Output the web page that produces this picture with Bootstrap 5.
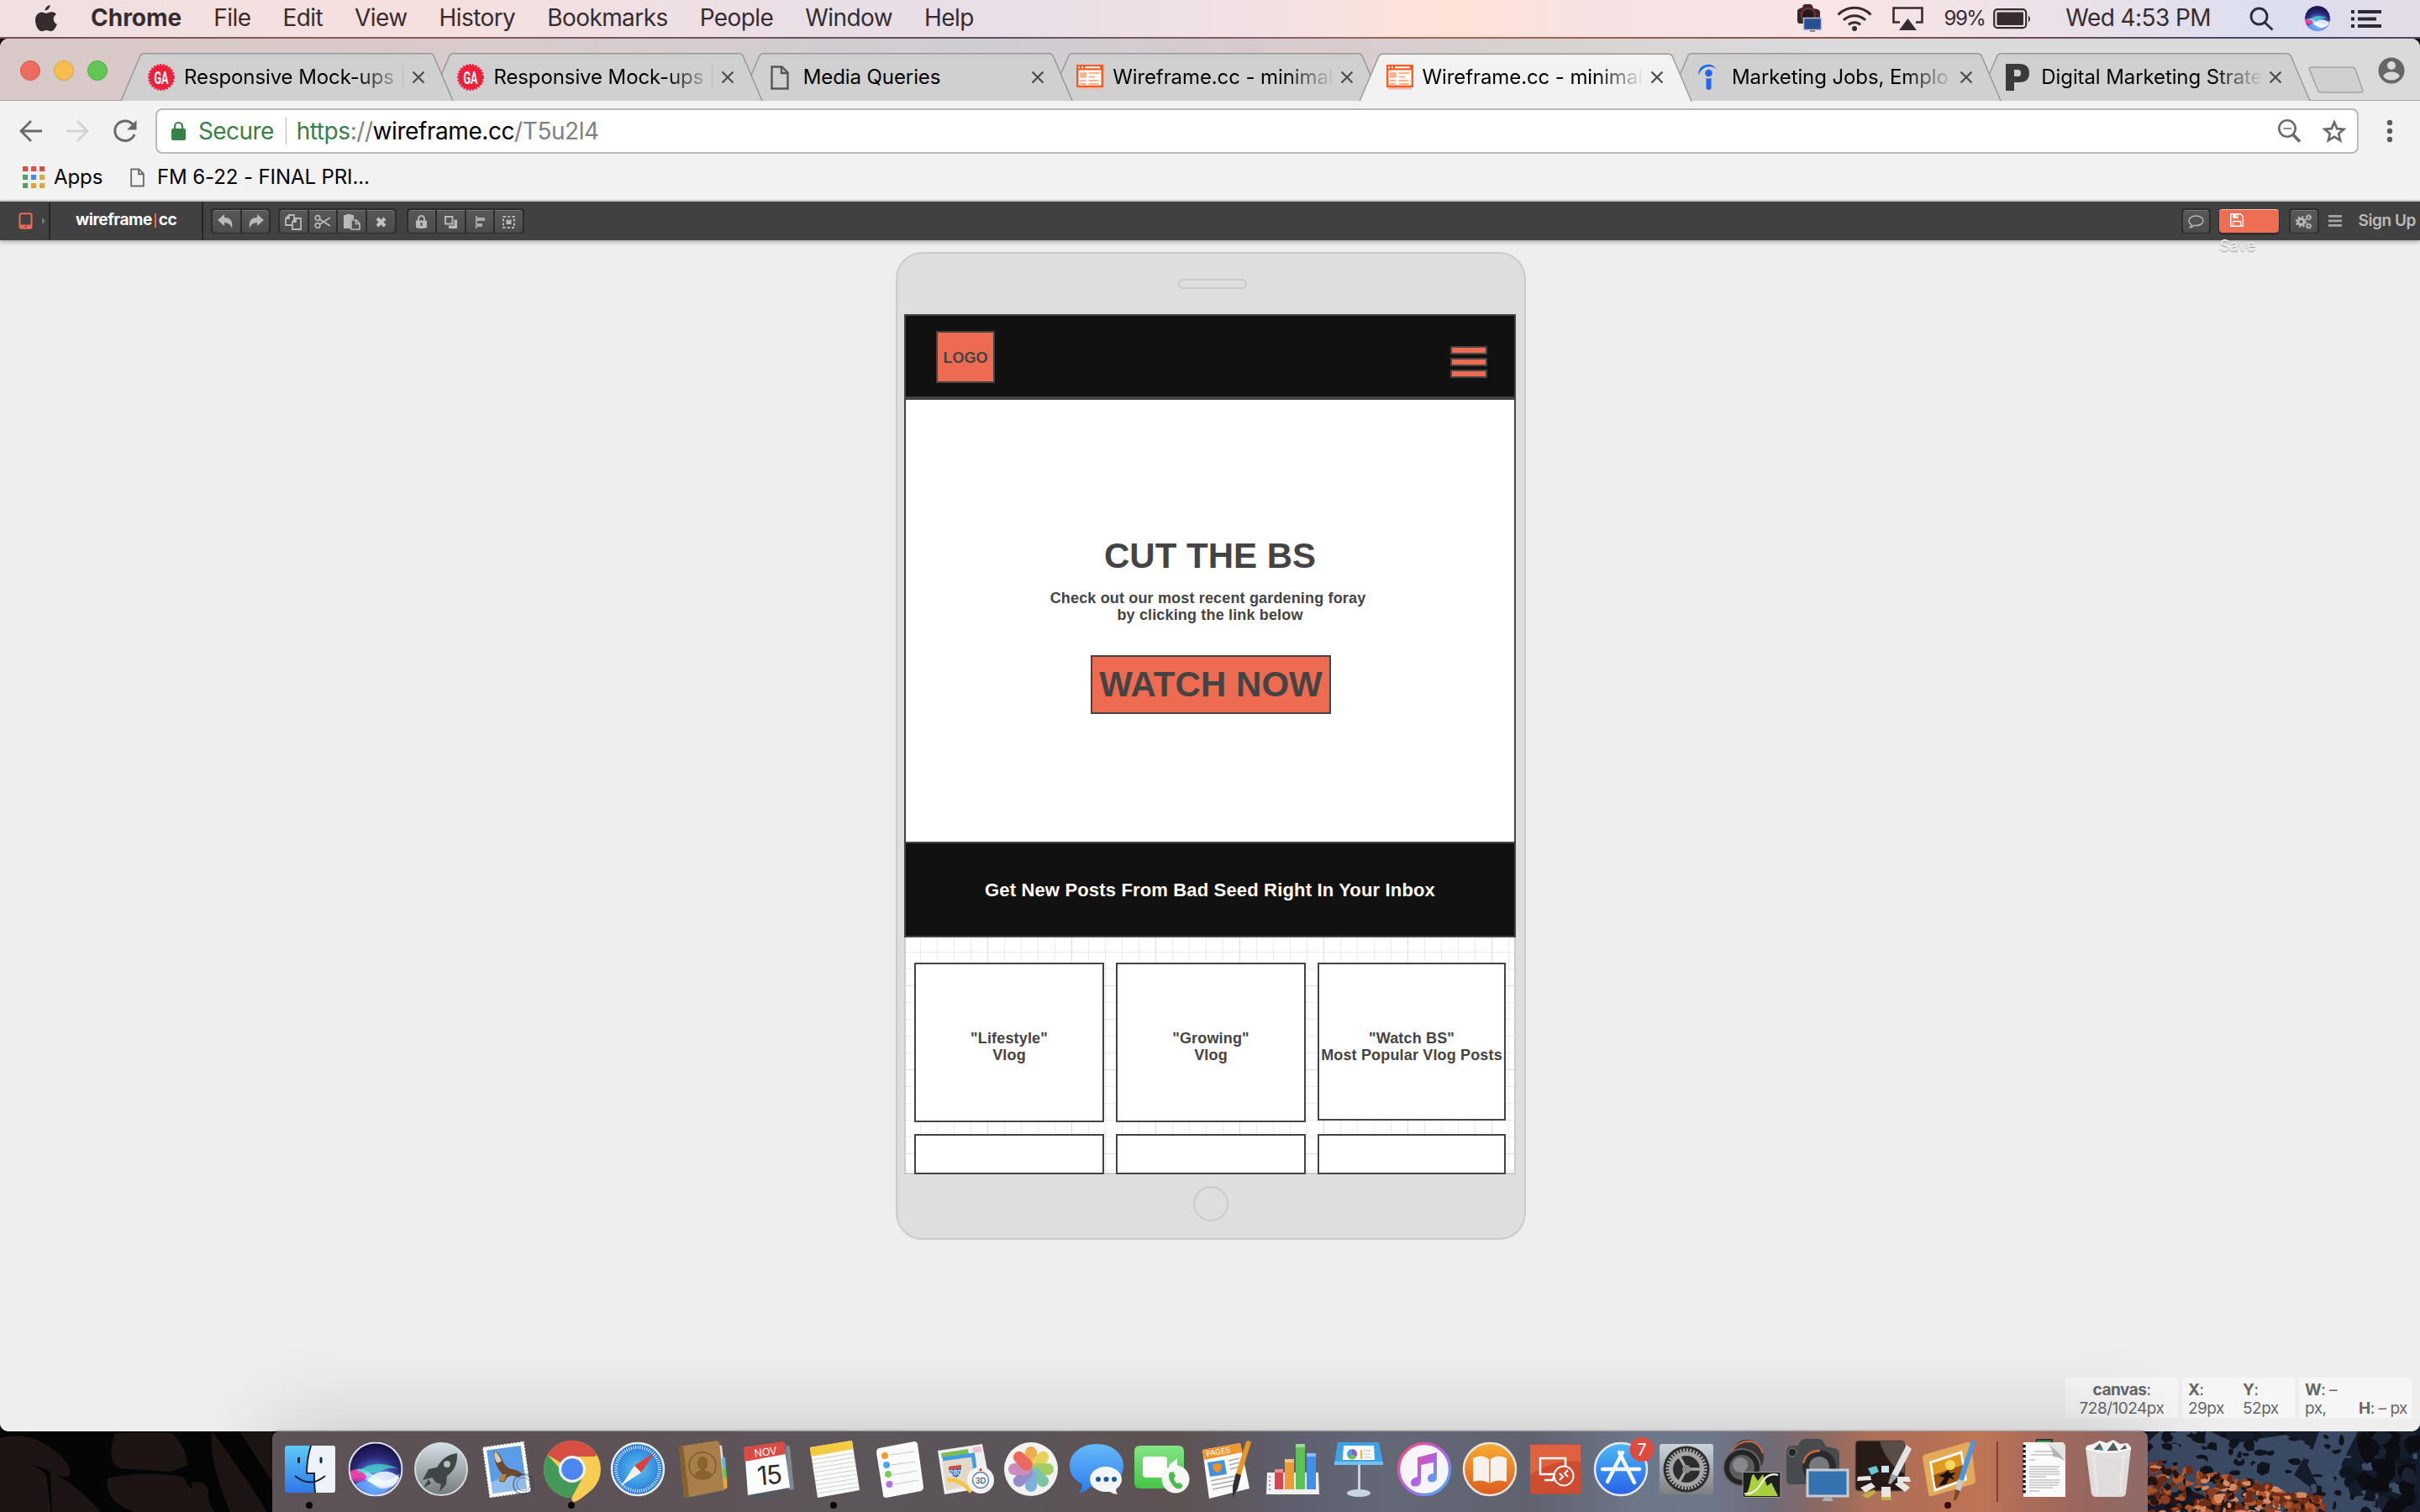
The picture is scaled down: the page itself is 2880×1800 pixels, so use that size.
<!DOCTYPE html>
<html lang="en">
<head>
<meta charset="utf-8">
<title>Wireframe.cc - minimal wireframing tool</title>
<link href="https://cdn.jsdelivr.net/npm/bootstrap@5.3.0/dist/css/bootstrap.min.css" rel="stylesheet">
<script src="https://cdn.jsdelivr.net/npm/bootstrap@5.3.0/dist/js/bootstrap.bundle.min.js"></script>
<style>
  html, body { width: 2880px; height: 1800px; overflow: hidden; }
  body { font-family: Inter, "Noto Sans", sans-serif; color: #000; background: #0d0b0b; line-height: 1.2; }
  svg { display: block; flex: none; overflow: visible; }

  /* macOS menu bar */
  .menubar { height: 46px; font-size: 28px; color: #362c2f; white-space: nowrap; letter-spacing: -.58px;
    background: linear-gradient(90deg,#f0e0e1 0,#f6e0df 520px,#e8dfe6 1000px,#e9dfe6 1250px,#f2e1e3 1500px,#ffe2d8 1730px,#f6e2e2 1900px,#f9e5e5 2180px,#e9e0e9 2480px,#dcdff0 2700px,#e3dbe6 2880px); }
  .menubar-rule { height: 2px; background: linear-gradient(90deg,#7c5052 0,#875c5c 500px,#5b4d60 1150px,#85616a 1500px,#a2674f 1750px,#8a5050 2200px,#474766 2700px,#4f4466 2880px); }
  .menu-left { padding-left: 41px; gap: 38px; height: 44px; }
  .menu-app { margin-left: 2px; letter-spacing: 0; }
  .menu-right { padding-right: 46px; }
  .batt-text { font-size: 24px; letter-spacing: -1.5px; margin-left: 25px; }

  /* browser frame */
  .browser { height: 1658px; background: #f2f2f2; border-radius: 10px; overflow: hidden; z-index: 1; }
  .tabstrip { height: 73px; background: linear-gradient(90deg,#d9c8c8 0,#d8cbcb 600px,#cfcdd3 1200px,#d8cacd 1520px,#d8d4d2 1900px,#dadada 2150px,#dadada 2880px); }
  .lights { width: 144px; padding: 26px 0 0 23.5px; gap: 16px; }
  .lights i { width: 24px; height: 24px; border-radius: 50%; border: 1px solid; }
  .l-red { background: #ed6b60; border-color: #d6574c !important; }
  .l-yel { background: #f5be4f; border-color: #d9a33c !important; }
  .l-grn { background: #62c655; border-color: #4faa42 !important; }
  .tab-item { width: 368.4px; height: 56px; margin-top: 17px; padding: 2px 0 0 32px; }
  .tab-shape { position: absolute; left: 0; top: 0; z-index: -1; }
  .tab-ico { width: 43px; }
  .tab-text { width: 271px; height: 32px; font-size: 24px; line-height: 32px; overflow: hidden; white-space: nowrap; letter-spacing: -.1px; }
  .tab-fade { -webkit-mask-image: linear-gradient(90deg,#000 205px,transparent 264px); mask-image: linear-gradient(90deg,#000 205px,transparent 264px); }
  .strip-rule { height: 1px; background: #a2a0a2; }
  .navrow { height: 72px; padding-left: 23px; }
  .omnibox { width: 2622px; height: 54px; margin-left: 22px; background: #fff; border: 2px solid #b8b8b8; border-radius: 8px; font-size: 28px; padding: 0 12px 0 17px; letter-spacing: -.43px; }
  .omnibox span { padding-top: 1px; }
  .vr-line { width: 1px; height: 32px; background: #b5b5b5; margin: 0 12px 0 14px; }
  .c-green { color: #378047; } .c-gray { color: #808080; }
  .bookrow { height: 48px; font-size: 24px; padding: 0 0 7px 27px; border-bottom: 2px solid #d0d0d0; letter-spacing: -.1px; }

  /* wireframe.cc toolbar */
  .wfbar { height: 46px; background: #414141; box-shadow: 0 2px 5px rgba(0,0,0,.3); z-index: 3; font-size: 19px; font-weight: 600; color: #bbb; white-space: nowrap; letter-spacing: -.42px; }
  .wf-dev { width: 60px; height: 44px; border-right: 2px solid #262626; padding-left: 22px; gap: 11px; }
  .wf-brand { width: 182px; height: 46px; border-right: 2px solid #262626; color: #fff; padding: 0 0 1px 30px; font-weight: 700; }
  .wf-brand em { width: 2px; height: 17px; background: #ee6a50; margin: 0 3px; }
  .tool-group { height: 30px; border-radius: 4px; background: #2d2d2d; padding: 2px; gap: 2px; }
  .tool-group b { height: 27px; width: 32.6px; background: linear-gradient(#575757,#4c4c4c); border-top: 1px solid #777; display: flex; align-items: center; justify-content: center; }
  .tool-group b:first-child { border-radius: 4px 0 0 4px; } .tool-group b:last-child { border-radius: 0 4px 4px 0; }
  .tool-group b:only-child { border-radius: 4px; }
  .save-btn { width: 71px; height: 28px; border-radius: 4px; background: #ee6e53; border-top: 1px solid #ffb9a6; box-shadow: 0 2px 0 1px #303030; padding: 4px 0 0 13px; }
  .save-word { position: absolute; left: 0; top: 32px; color: #ececec; font-weight: 500; text-shadow: 0 1px 1px #999; }

  /* canvas */
  .stage { height: 1418px; background: #eee; }
  .phone { width: 750px; height: 1176px; margin: 14px 0 0 1066px; background: #dedede; border: 2px solid #cbcbcb; border-radius: 32px; }
  .speaker { width: 82px; height: 12px; border: 2px solid #cbcbcb; border-radius: 6px; margin: 30px 0 30px 334px; }
  .home-btn { width: 42px; height: 42px; border: 2px solid #cbcbcb; border-radius: 50%; margin: 14px auto 0 352px; }
  .screen { width: 728px; height: 1024px; margin-left: 8px; overflow: hidden; font-family: "Liberation Sans", Arial, sans-serif; font-weight: 700; font-size: 18px; line-height: 20px; color: #444; letter-spacing: .16px; text-align: center;
    background:
      linear-gradient(90deg,#ddd 1px,transparent 1px) -1px -1px/100px 100px,
      linear-gradient(#ddd 1px,transparent 1px) -1px -1px/100px 100px,
      linear-gradient(90deg,#ececec 1px,transparent 1px) -1px -1px/20px 20px,
      linear-gradient(#ececec 1px,transparent 1px) -1px -1px/20px 20px, #fff;
    box-shadow: inset 0 0 0 2px #ccc; }
  .box { border: 2px solid #444; }
  .m-head { height: 100px; background: #111; padding: 18px 32px 0 36px; }
  .m-logo { width: 70px; height: 62px; background: #ee6b51; padding-top: 2px; letter-spacing: 0; }
  .m-burger { gap: 4px; margin-top: 18px; }
  .m-burger i { width: 44px; height: 10px; background: #ee6b51; }
  .m-hero { height: 530px; background: #fff; padding-top: 162px; }
  .m-title { font-size: 42px; line-height: 48px; letter-spacing: 0; }
  .m-note { margin-top: 16px; }
  .m-lead { display: inline-block; margin-right: 5px; }
  .m-cta { width: 286px; height: 70px; background: #ee6b51; font-size: 42px; margin: 38px 0 0 2px; letter-spacing: .05px; }
  .m-band { height: 114px; margin-top: -2px; background: #111; color: #fff; font-size: 22px; padding-top: 1px; }
  .m-cards { padding: 30px 12px 0; gap: 14px; align-items: flex-start; }
  .m-card { width: 226px; height: 190px; background: #fff; white-space: nowrap; padding-top: 10px; }
  .m-card.slim { width: 224px; height: 188px; padding-top: 12px; }
  .m-cards.second { padding-top: 14px; }
  .second .m-card { height: 48px; padding: 0; }

  .readout { position: absolute; right: 10px; bottom: 16px; gap: 5px; font-size: 19px; line-height: 22px; color: #666; z-index: 2; letter-spacing: -.5px; }
  .readout > div { width: 134px; height: 48px; background: #f6f6f6; padding-top: 4px; white-space: nowrap; }
  .ro-xy { padding-left: 7px; } .ro-xy > :first-child { width: 65px; }
  .ro-wh { padding-left: 7px; padding-right: 5px; }

  /* dock and desktop */
  .wallpaper { position: absolute; left: 0; bottom: 0; }
  .dock { width: 2232px; height: 96px; margin-left: 324px; padding-left: 5px; border-radius: 8px 8px 0 0; box-shadow: 0 0 110px rgba(0,0,0,.2), 0 -1px 2px rgba(0,0,0,.35); z-index: 4;
    background: linear-gradient(90deg,#5d5357 0,#5c5154 250px,#5d5559 600px,#5b5458 900px,#5e5353 1080px,#5f6070 1230px,#636877 1330px,#61626e 1500px,#6e7689 1620px,#6f778b 1710px,#6f6b78 1780px,#8e6a62 1850px,#ad7059 1900px,#b46f55 1970px,#c07455 2030px,#ab6c5a 2090px,#97675f 2160px,#8f6a68 2232px); }
  .dock text { font-family: Inter, sans-serif; }
  .dock-sep { width: 2px; height: 72px; margin: 12px 15px 0 19px; background: #80402f; }
</style>
</head>
<body class="d-flex flex-column position-relative">

<header class="menubar d-flex flex-column flex-shrink-0">
  <div class="d-flex align-items-center position-relative menu-left">
    <svg width="27" height="32" viewBox="0 0 27 32" fill="#362c2f"><path d="M18.6 0c.2 3-2.700 6.600-6 6.400C12.300 3.500 15.500.3 18.600 0zM26 11c-5 3-4 10 .9 11.800C25.500 27 22.500 31.300 19.800 31.300c-2 0-2.900-1.300-5.500-1.300-2.700 0-3.600 1.300-5.500 1.300C5 31.300 1 24.500 1 17.900 1 12 4.800 8.400 8.700 8.400c2.300 0 4.100 1.400 5.600 1.400 1.400 0 3.400-1.500 6.100-1.500 1.500 0 4 .5 5.600 2.700z"/></svg>
    <span class="menu-app fw-bold">Chrome</span>
    <span>File</span><span>Edit</span><span>View</span><span>History</span>
    <span>Bookmarks</span><span>People</span><span>Window</span><span>Help</span>
    <div class="d-flex align-items-center ms-auto menu-right">
      <svg width="34" height="34" viewBox="0 0 34 34"><path d="M3 8q0-2 3-3l3-1 1-3q1-1 3-1h5q2 0 3 2l1 3 5 1q3 1 3 4v13H6q-3 0-3-3z" fill="#3c2527"/><circle cx="16" cy="13" r="8" fill="#241a1e" stroke="#7c3438" stroke-width="2"/><rect x="10.500" y="16.500" width="21" height="14" fill="#2b4f92" stroke="#b9c4d6" stroke-width="1.500"/><path d="M18 31h6v2h-6z" fill="#888"/></svg>
      <svg class="ms-3" width="42" height="30" viewBox="0 0 42 30" fill="none" stroke="#362c2f" stroke-width="3"><path d="M1.500 10.500a27 27 0 0 1 39 0M8 17a18.500 18.500 0 0 1 26 0M14 22.500a10 10 0 0 1 14 0"/><circle cx="21" cy="27" r="3" fill="#362c2f" stroke="none"/></svg>
      <svg style="margin-left:24px" width="37" height="28" viewBox="0 0 37 28"><path d="M9 18.500H1.500V1.500h34v17H28" fill="none" stroke="#362c2f" stroke-width="2.600"/><path d="M18.500 14l10.500 14H8z" fill="#362c2f"/></svg>
      <span class="batt-text">99%</span>
      <svg style="margin-left:10px" width="46" height="25" viewBox="0 0 46 25"><rect x="1.200" y="1.200" width="38" height="22" rx="4" fill="none" stroke="#362c2f" stroke-width="2.200"/><rect x="4.500" y="4.500" width="31.500" height="15.500" rx="1" fill="#362c2f"/><path d="M42 8.500q4 4 0 8z" fill="#362c2f"/></svg>
      <span style="margin-left:40px">Wed 4:53 PM</span>
      <svg style="margin-left:46px" width="29" height="29" viewBox="0 0 29 29" fill="none" stroke="#2f2a33" stroke-width="2.800"><circle cx="11.500" cy="11.500" r="9.500"/><path d="M18 18.500l9.500 9"/></svg>
      <svg style="margin-left:36px" width="32" height="32" viewBox="0 0 64 64"><use href="#siri"/></svg>
      <svg style="margin-left:24px" width="36" height="21" viewBox="0 0 36 21" fill="#2d2a33"><path d="M0 0h4v4H0zM8 0h28v4H8zM0 8.500h4v4H0zM8 8.500h22v4H8zM0 17h4v4H0zM8 17h28v4H8z"/></svg>
    </div>
  </div>
  <div class="menubar-rule"></div>
</header>

<svg width="0" height="0" class="position-absolute">
  <defs>
    <radialGradient id="sg" cx=".5" cy=".75" r=".8"><stop offset="0" stop-color="#6fd4ff"/><stop offset=".3" stop-color="#5877e8"/><stop offset=".6" stop-color="#2c2a78"/><stop offset="1" stop-color="#0c0633"/></radialGradient>
    <symbol id="siri" viewBox="0 0 64 64"><circle cx="32" cy="32" r="31" fill="url(#sg)" stroke="#dfe3f2" stroke-width="2"/><path d="M2 36q14-10 28 4 14 12 30-3-2 8-8 14-20 4-30-6-8-6-20 0z" fill="#b8f2ff" opacity=".75"/><path d="M2 34c8-4 15 0 20 8-6 4-12 6-18 2z" fill="#ef2f9c" opacity=".85"/><path d="M22 46c8-12 26-16 38-4-4 12-18 16-26 12z" fill="#fff" opacity=".8"/><path d="M10 36q20-18 50-4-14-4-24 4z" fill="#42e0c0" opacity=".7"/><path d="M8 50q12-8 22 0t20 2q-8 10-18 10T8 50z" fill="#6aa9ff" opacity=".7"/></symbol>
    <symbol id="ga" viewBox="0 0 32 32"><circle cx="16" cy="16" r="14.500" fill="#ee1f3b"/><circle cx="16" cy="16" r="15" fill="none" stroke="#ee1f3b" stroke-width="2" stroke-dasharray="2.200 1.600"/><text x="16" y="23.500" text-anchor="middle" font-family="Roboto, sans-serif" font-weight="700" font-size="21" textLength="17" lengthAdjust="spacingAndGlyphs" fill="#fff">GA</text></symbol>
    <symbol id="wf" viewBox="0 0 32 30"><rect x="2" y="26" width="28" height="3.500" fill="#e9b9ab"/><rect x="1.200" y="1.200" width="29.600" height="24.600" fill="#fff" stroke="#ff5a1e" stroke-width="2.400"/><path d="M0 0h32v6.500H0z" fill="#ff5a1e"/><path d="M2 2.200h2v2H2zM6 2.200h2v2H6zM10 2.200h18v2H10z" fill="#fff"/><path d="M4 9h8v6.500H4zM14.500 9h13v2h-13zM14.500 13.500h7.500v2h-7.500zM4 18h7.500v2H4zM14.500 18h12v2h-12zM4 22h7.500v2H4zM14.500 22h12v2h-12z" fill="#ffb28c"/></symbol>
    <symbol id="page" viewBox="0 0 22 29"><path d="M1.500 1.500h12l7 7v19h-19z M13 1.500v7.500h7.500" fill="none" stroke="currentColor" stroke-width="2.400"/></symbol>
    <symbol id="x" viewBox="0 0 16 16"><path d="M1.500 1.500l13 13M14.500 1.500l-13 13" stroke="#4c4c4c" stroke-width="2.200" fill="none"/></symbol>
    <symbol id="tabbg" viewBox="0 0 396 57"><path d="M0 57L23 3Q24.500.7 27 .7H368Q370.500.7 372 3L395 57" stroke="#979597" stroke-width="1.400"/></symbol>
  </defs>
</svg>

<div class="browser d-flex flex-column flex-shrink-0 position-relative">
  <div class="tabstrip d-flex">
    <div class="lights d-flex"><i class="l-red"></i><i class="l-yel"></i><i class="l-grn"></i></div>
    <div class="tab-item d-flex align-items-center position-relative" style="z-index:7"><svg class="tab-shape" width="396" height="57" fill="#d0d0d0"><use href="#tabbg"/></svg><div class="tab-ico"><svg width="32" height="32"><use href="#ga"/></svg></div><div class="tab-text tab-fade">Responsive Mock-ups |</div><svg width="16" height="16"><use href="#x"/></svg></div>
    <div class="tab-item d-flex align-items-center position-relative" style="z-index:6"><svg class="tab-shape" width="396" height="57" fill="#d0d0d0"><use href="#tabbg"/></svg><div class="tab-ico"><svg width="32" height="32"><use href="#ga"/></svg></div><div class="tab-text tab-fade">Responsive Mock-ups |</div><svg width="16" height="16"><use href="#x"/></svg></div>
    <div class="tab-item d-flex align-items-center position-relative" style="z-index:5"><svg class="tab-shape" width="396" height="57" fill="#d0d0d0"><use href="#tabbg"/></svg><div class="tab-ico" style="color:#555;padding-left:4px"><svg width="22" height="29"><use href="#page"/></svg></div><div class="tab-text">Media Queries</div><svg width="16" height="16"><use href="#x"/></svg></div>
    <div class="tab-item d-flex align-items-center position-relative" style="z-index:4"><svg class="tab-shape" width="396" height="57" fill="#d0d0d0"><use href="#tabbg"/></svg><div class="tab-ico"><svg width="32" height="30"><use href="#wf"/></svg></div><div class="tab-text tab-fade">Wireframe.cc - minimal</div><svg width="16" height="16"><use href="#x"/></svg></div>
    <div class="tab-item d-flex align-items-center position-relative" style="z-index:8"><svg class="tab-shape" width="396" height="58" fill="#f2f2f2"><use href="#tabbg"/></svg><div class="tab-ico"><svg width="32" height="30"><use href="#wf"/></svg></div><div class="tab-text tab-fade">Wireframe.cc - minimal</div><svg width="16" height="16"><use href="#x"/></svg></div>
    <div class="tab-item d-flex align-items-center position-relative" style="z-index:3"><svg class="tab-shape" width="396" height="57" fill="#d0d0d0"><use href="#tabbg"/></svg><div class="tab-ico" style="padding-left:3px"><svg width="22" height="32" viewBox="0 0 22 32" fill="#2164f4"><circle cx="12.500" cy="11" r="4.300"/><path d="M9.500 17q3 1.500 6-.5v12.500q-.5 2-3 2t-3-2zM.3 14Q-.5 4 8 1.500T21 5.500Q14 1.500 8 4.500T.3 14z"/></svg></div><div class="tab-text tab-fade">Marketing Jobs, Emplo</div><svg width="16" height="16"><use href="#x"/></svg></div>
    <div class="tab-item d-flex align-items-center position-relative" style="z-index:2"><svg class="tab-shape" width="396" height="57" fill="#d0d0d0"><use href="#tabbg"/></svg><div class="tab-ico"><svg width="30" height="32" viewBox="0 0 30 32"><path d="M1 0h16q12 0 12 11T17 22h-6v10H1zM11 7v8h5q3 0 3-4t-3-4z" fill="#3a3a3a" fill-rule="evenodd"/></svg></div><div class="tab-text tab-fade">Digital Marketing Strate</div><svg width="16" height="16"><use href="#x"/></svg></div>
    <svg style="margin:33px 0 0 24px" width="66" height="32" viewBox="0 0 66 32"><path d="M4 1h48q3 0 4 2.500l8.500 24q1 3.500-2 3.500h-47q-3 0-4-2.500L1.500 4Q.8 1 4 1z" fill="#d0d0d0" stroke="#a3a3a3" stroke-width="1.500"/></svg>
    <svg style="margin:22px 0 0 17px" width="32" height="32" viewBox="0 0 32 32"><circle cx="16" cy="16" r="15.500" fill="#666"/><circle cx="16" cy="10" r="5" fill="#dadada"/><path d="M6 22.500q3-5 10-5t10 5q-3.500 5-10 5t-10-5z" fill="#dadada"/></svg>
  </div>
  <div class="strip-rule flex-shrink-0"></div>
  <div class="navrow d-flex align-items-center flex-shrink-0">
    <svg width="27" height="26" viewBox="0 0 27 26" fill="none" stroke="#696969" stroke-width="2.800"><path d="M27 13H2M14 1L2 13l12 12"/></svg>
    <svg style="margin-left:29px" width="27" height="26" viewBox="0 0 27 26" fill="none" stroke="#d3d3d3" stroke-width="2.800"><path d="M0 13h25M13 1l12 12-12 12"/></svg>
    <svg style="margin-left:29px" width="28" height="27" viewBox="0 0 28 27"><path d="M24 6.500A12 11.800 0 1 0 25 17" fill="none" stroke="#696969" stroke-width="3"/><path d="M27.500 0v11.500H16z" fill="#696969"/></svg>
    <div class="omnibox d-flex align-items-center">
      <svg width="17" height="22" viewBox="0 0 17 22"><rect y="8" width="17" height="14" rx="2" fill="#378047"/><path d="M4 9V5.500a4.500 4.500 0 0 1 9 0V9" fill="none" stroke="#378047" stroke-width="2.200"/></svg>
      <span class="c-green" style="margin-left:15px;letter-spacing:-.6px">Secure</span><span class="vr-line"></span>
      <span><span class="c-green">https</span><span class="c-gray">://</span>wireframe.cc<span class="c-gray">/T5u2l4</span></span>
      <svg class="ms-auto" width="27" height="28" viewBox="0 0 27 28" fill="none" stroke="#6a6a6a"><circle cx="11" cy="11" r="9.700" stroke-width="2.600"/><path d="M6.500 11h9.500" stroke-width="1.600"/><path d="M18 18.500l8 8" stroke-width="3.800"/></svg>
      <svg style="margin-left:25px" width="30" height="29" viewBox="0 0 30 29"><path d="M15 3.500l3.200 7.600 8.200.7-6.200 5.400 1.900 8L15 20.900l-7.100 4.300 1.900-8-6.200-5.400 8.200-.7z" fill="none" stroke="#6a6a6a" stroke-width="2.700"/></svg>
    </div>
    <svg style="margin-left:33px" width="8" height="28" viewBox="0 0 8 28" fill="#5c5c5c"><circle cx="4" cy="4" r="3.200"/><circle cx="4" cy="14" r="3.200"/><circle cx="4" cy="24" r="3.200"/></svg>
  </div>
  <div class="bookrow d-flex align-items-center flex-shrink-0">
    <svg width="27" height="27" viewBox="0 0 27 27"><path d="M0 0h6v6H0zM10 0h6v6h-6zM20 0h6v6h-6z" fill="#e04b3f"/><path d="M0 10h6v6H0zM0 20h6v6H0z" fill="#56a05e"/><path d="M10 10h6v6h-6z" fill="#4587ee"/><path d="M20 10h6v6h-6zM10 20h6v6h-6zM20 20h6v6h-6z" fill="#e3a33b"/></svg>
    <span style="margin-left:10px;width:91px">Apps</span>
    <svg width="17" height="25" style="color:#6b6b6b"><use href="#page"/></svg>
    <span style="margin-left:15px">FM 6-22 - FINAL PRI...</span>
  </div>

  <nav class="wfbar d-flex align-items-center position-relative flex-shrink-0">
    <div class="wf-dev d-flex align-items-center"><svg width="17" height="20" viewBox="0 0 17 20"><rect x="1.500" y="1.200" width="14" height="17.500" rx="2" fill="none" stroke="#ee6a50" stroke-width="2"/><path d="M1 14.500h15v4H1z" fill="#ee6a50"/><circle cx="8.500" cy="16.800" r="1" fill="#414141"/></svg><svg width="4" height="8"><path d="M0 0l4 4-4 4z" fill="#777"/></svg></div>
    <div class="wf-brand d-flex align-items-center"><span>wireframe</span><em></em><span>cc</span></div>
    <div class="tool-group d-flex" style="margin-left:9px">
      <b><svg width="20" height="18" viewBox="0 0 20 18"><path d="M8 0v4q11 0 9 13-2-7-9-7v4L0 7z" fill="#b9b9b9"/></svg></b>
      <b><svg width="20" height="18" viewBox="0 0 20 18"><path d="M12 0v4Q1 4 3 17q2-7 9-7v4l8-7z" fill="#b9b9b9"/></svg></b>
    </div>
    <div class="tool-group d-flex" style="margin-left:9px">
      <b><svg width="20" height="19" viewBox="0 0 20 19" fill="#505050" stroke="#b9b9b9" stroke-width="1.800"><path d="M5 1h6v12H1V5zM5 1v4H1"/><path d="M13 5h6v13H9V9zM13 5v4H9"/></svg></b>
      <b><svg width="20" height="16" viewBox="0 0 20 16" fill="none" stroke="#b9b9b9" stroke-width="1.800"><circle cx="4" cy="3.500" r="2.800"/><circle cx="4" cy="12.500" r="2.800"/><path d="M6.500 5L19 13M6.500 11L19 3"/></svg></b>
      <b><svg width="20" height="19" viewBox="0 0 20 19"><path d="M0 1h3V0h6v1h3v5H8v11H0z" fill="#b9b9b9"/><path d="M9 7h6l4 4v7H9zM14.500 7v4.500H19" fill="#505050" stroke="#b9b9b9" stroke-width="1.700"/></svg></b>
      <b><svg width="13" height="13" viewBox="0 0 13 13"><path d="M2 2l9 9M11 2l-9 9" stroke="#c4c4c4" stroke-width="4"/></svg></b>
    </div>
    <div class="tool-group d-flex" style="margin-left:12px">
      <b><svg width="13" height="16" viewBox="0 0 13 16"><path d="M0 6.500h13V15q-6.500 2-13 0z" fill="#b9b9b9"/><path d="M3 7V4.500a3.500 3.500 0 0 1 7 0V7" fill="none" stroke="#b9b9b9" stroke-width="2"/><path d="M5.500 9h2v4h-2z" fill="#505050"/></svg></b>
      <b><svg width="15" height="15" viewBox="0 0 15 15"><path d="M1 1h8.500v8.500H1z" fill="none" stroke="#b9b9b9" stroke-width="2"/><path d="M11.500 4.500H15V15H5v-3.500h6.500z" fill="#b9b9b9"/></svg></b>
      <b><svg width="11" height="15" viewBox="0 0 11 15"><path d="M0 0h1.800v15H0zM2 2h9v4H2zM2 9h6v4H2z" fill="#a9a9a9"/></svg></b>
      <b><svg width="15" height="15" viewBox="0 0 15 15"><rect x="1" y="1" width="13" height="13" fill="none" stroke="#b9b9b9" stroke-width="2" stroke-dasharray="3 2.200"/><path d="M4.500 5l1.500-1 1.500 2 1.500-2 1.500 1v5h-6z" fill="#b9b9b9"/></svg></b>
    </div>
    <div class="d-flex align-items-center ms-auto">
      <div class="tool-group d-flex"><b style="width:31px"><svg width="19" height="16" viewBox="0 0 19 16"><path d="M9.500 1C14 1 18 3.200 18 6.800s-4 5.700-8.500 5.700q-1.500 0-2.700-.3Q5 14.500 2.500 14.800q1.500-1.500 1.200-3.500Q1 9.500 1 6.800C1 3.200 5 1 9.500 1z" fill="none" stroke="#b9b9b9" stroke-width="1.500"/></svg></b></div>
      <div class="save-btn position-relative" style="margin-left:10px"><svg width="16" height="16" viewBox="0 0 16 16"><path d="M.8.8h11.500l3 3v11.500H.8z" fill="none" stroke="#fff" stroke-width="1.500"/><path d="M3 1h7v5H3z" fill="#fff"/><path d="M7.300 1.500h1.500v3H7.300z" fill="#ee6e53"/><path d="M3.500 15V9.500h9V15" fill="none" stroke="#fff" stroke-width="1.300"/></svg><span class="save-word">Save</span></div>
      <div class="tool-group d-flex" style="margin-left:12px"><b style="width:32px"><svg width="20" height="18" viewBox="0 0 20 18" fill="none" stroke="#b9b9b9"><circle cx="6.500" cy="9" r="3.600" stroke-width="3"/><circle cx="6.500" cy="9" r="5.800" stroke-width="2" stroke-dasharray="2.300 2.250"/><circle cx="15.500" cy="3.800" r="2" stroke-width="1.500"/><circle cx="15.500" cy="3.800" r="3.300" stroke-width="1.200" stroke-dasharray="1.300 1.300"/><circle cx="15.500" cy="14" r="2" stroke-width="1.500"/><circle cx="15.500" cy="14" r="3.300" stroke-width="1.200" stroke-dasharray="1.300 1.300"/></svg></b></div>
      <svg style="margin-left:11px" width="16" height="14" viewBox="0 0 16 14"><path d="M0 0h16v2.700H0zM0 5.500h16v2.700H0zM0 11h16v2.700H0z" fill="#a5a5a5"/></svg>
      <span style="margin:0 5px 0 19px">Sign Up</span>
    </div>
  </nav>

  <main class="stage position-relative flex-shrink-0 d-flex flex-column">
    <div class="phone flex-shrink-0">
      <div class="speaker"></div>
      <div class="screen">
        <div class="m-head box d-flex justify-content-between align-items-start">
          <div class="m-logo box d-flex align-items-center justify-content-center">LOGO</div>
          <div class="m-burger d-flex flex-column"><i class="box"></i><i class="box"></i><i class="box"></i></div>
        </div>
        <div class="m-hero box d-flex flex-column align-items-center">
          <div class="m-title">CUT THE BS</div>
          <div class="m-note"><span class="m-lead">Check out our most recent gardening foray</span><br>by clicking the link below</div>
          <div class="m-cta box d-flex align-items-center justify-content-center">WATCH NOW</div>
        </div>
        <div class="m-band box d-flex align-items-center justify-content-center">Get New Posts From Bad Seed Right In Your Inbox</div>
        <div class="m-cards d-flex">
          <div class="m-card box d-flex align-items-center justify-content-center"><div>"Lifestyle"<br>Vlog</div></div>
          <div class="m-card box d-flex align-items-center justify-content-center"><div>"Growing"<br>Vlog</div></div>
          <div class="m-card slim box d-flex align-items-center justify-content-center"><div>"Watch BS"<br>Most Popular Vlog Posts</div></div>
        </div>
        <div class="m-cards second d-flex">
          <div class="m-card box"></div><div class="m-card box"></div><div class="m-card slim box"></div>
        </div>
      </div>
      <div class="home-btn"></div>
    </div>
    <div class="readout d-flex">
      <div class="text-center"><b>canvas</b>:<br>728/1024px</div>
      <div class="ro-xy d-flex"><div><b>X</b>:<br>29px</div><div><b>Y</b>:<br>52px</div></div>
      <div class="ro-wh d-flex justify-content-between"><div><b>W</b>: –<br>px,</div><div class="align-self-end"><b>H</b>: – px</div></div>
    </div>
  </main>
</div>

<svg class="wallpaper" width="2880" height="106" viewBox="0 1694 2880 106">
  <path d="M0 1694h400v106H0z" fill="#060505"/>
  <path d="M0 1712q30-8 55 8t28 30-20 4q-20-14-63-12zM135 1706h70q18 20 18 38l-20 8-60-4q-18-8-6-42zM0 1742q40-4 55 14l6 44H0zM60 1752q30 14 60 48H62zM128 1760q40-10 90-2l26 42H160q-36-12-32-40zM228 1765q20-4 20 12t8 23h-30zM252 1704q24 30 66 96h-44q-26-60-22-96zM285 1704l39 60v-60z" fill="#1c1513"/>
  <path d="M2500 1694h380v106h-380z" fill="#141b2a"/>
  <path d="M2570 1704h60l30 14 60-10 30 14-20 34 40 30 60-8 6 22h-160l-70-26-60-10-20-20zM2760 1704h46l-20 40 16 50-36-10-20-40z" fill="#3b4a63"/>
  <g id="rocks"></g>
</svg>

<footer class="flex-shrink-0">
  <div class="dock d-flex position-relative">
    <!-- Finder -->
    <svg width="78" height="96"><linearGradient id="f1" x2="0" y2="1"><stop stop-color="#5ccbf7"/><stop offset="1" stop-color="#2f78ea"/></linearGradient><rect x="10" y="17" width="60" height="56" rx="3" fill="url(#f1)"/><path d="M41 17h26q3 0 3 3v50q0 3-3 3H46l-1-23h-9q0-20 5-33z" fill="#eef3fa"/><path d="M26.500 32v4.500M53 32v4.500" stroke="#12273e" stroke-width="3" stroke-linecap="round"/><path d="M22 53q18 15 36 0M41 17q-5 16-5 33h9q0 14 1 23" fill="none" stroke="#142536" stroke-width="2"/><circle cx="39" cy="88" r="4"/></svg>
    <!-- Siri -->
    <svg width="78" height="96"><use href="#siri" x="7.500" y="12.500" width="65" height="65"/></svg>
    <!-- Launchpad -->
    <svg width="78" height="96"><linearGradient id="lp" x2="0" y2="1"><stop stop-color="#d3dfe6"/><stop offset="1" stop-color="#757b7b"/></linearGradient><circle cx="40" cy="45" r="31" fill="url(#lp)" stroke="#d4dbde" stroke-width="2"/><path d="M59 26q-16 2-24 17l-10 2-7 13 11-3 5 6 6 2-2 9 8-9 1-10q13-9 12-27z" fill="#3f4447"/><path d="M25 57l-6 10 9-5z" fill="#3f4447"/><circle cx="47" cy="39" r="4" fill="#b4bdc0"/></svg>
    <!-- Mail -->
    <svg width="78" height="96"><g transform="rotate(-8 40 45)"><rect x="15" y="15" width="50" height="61" fill="#fff"/><rect x="15" y="15" width="50" height="61" fill="none" stroke="#5d5357" stroke-width="1.500" stroke-dasharray="1.500 2.500"/><rect x="19.500" y="19.500" width="41" height="52" fill="#5c9ce6"/><path d="M19.500 58q20-8 41-2v15.500h-41z" fill="#a9cbee" opacity=".7"/><path d="M28 21q7 3 8 12 3 9 8 12 9 2 14 9l-5 3-8-4-6 2-4 5-6-2 5-8q-9-13-6-29z" fill="#6a4a2e"/><path d="M29 22q5 4 6 13l-5 1q-4-6-1-14z" fill="#d9cbb2"/><path d="M33 50l6 1-4 8-6-2z" fill="#b8813c"/></g><circle cx="60" cy="63" r="12" fill="none" stroke="#33425c" opacity=".5" stroke-width="2"/><circle cx="60" cy="63" r="8" fill="none" stroke="#33425c" opacity=".5"/></svg>
    <!-- Chrome -->
    <svg width="78" height="96"><circle cx="40" cy="45" r="34" fill="#f6cc52"/><path d="M40 45L10.600 28A34 34 0 0 1 69.400 28z" fill="#d64f42"/><path d="M26 45L10.600 28a34 34 0 0 0 29 51l15-27z" fill="#43985a"/><path d="M40 30h30.500q8 26-12 43.500t-19 5.500L54 52z" fill="#f6cc52"/><circle cx="40" cy="45" r="16" fill="#f1f1f1"/><circle cx="40" cy="45" r="12.800" fill="#4c86ee"/><circle cx="39" cy="88" r="4"/></svg>
    <!-- Safari -->
    <svg width="78" height="96"><radialGradient id="sf"><stop stop-color="#5fc3e8"/><stop offset="1" stop-color="#2276dd"/></radialGradient><circle cx="40" cy="45" r="31" fill="url(#sf)" stroke="#ececec" stroke-width="2.500"/><circle cx="40" cy="45" r="26" fill="none" stroke="#e8f4ff" stroke-width="4" stroke-dasharray="1 1.700"/><path d="M60 25L36 41l8 8z" fill="#e23c36"/><path d="M20 65l16-24 8 8z" fill="#f2f2f2"/></svg>
    <!-- Contacts -->
    <svg width="78" height="96"><path d="M58 16l4 1 6 50-6 4z" fill="#ddd"/><path d="M62 32l4-1 1 12-4 1z" fill="#5ab9e0"/><path d="M63 44l4-1 1 12-4 1z" fill="#6cc158"/><path d="M64 56l4-1 .5 12-4 2z" fill="#eda92c"/><path d="M11 18l45-7 3 2 6 57-45 9-3-1z" fill="#a87f4a"/><path d="M11 18l5-1 7 61-3 1-3-1z" fill="#86602f"/><circle cx="39" cy="41" r="16" fill="none" stroke="#7f5c30" stroke-width="1.500"/><path d="M39 30q6 0 6 7t-4 9q8 2 10 6-10 8-22 1 1-5 8-7-4-3-4-9t6-7z" fill="#86632f"/></svg>
    <!-- Calendar -->
    <svg width="78" height="96"><path d="M8 26l53-9 9 52-54 11z" fill="#4f5a66"/><path d="M60 16l5 2 5 51-6 1z" fill="#7d8895"/><path d="M11 19l47-6 7 54-50 9z" fill="#fdfdfd"/><path d="M10 19l48-7 2 15-49 9z" fill="#dc4a44"/><text x="36" y="29" font-size="12.500" fill="#fff" text-anchor="middle" transform="rotate(-8 36 24)">NOV</text><text x="40" y="63" font-size="31" text-anchor="middle" fill="#2c2c2c" letter-spacing="-1.500" transform="rotate(-5 40 50)">15</text></svg>
    <!-- Notes -->
    <svg width="78" height="96"><path d="M11 19l50-8 9 59-50 9z" fill="#fbfbf8"/><path d="M11 19l50-8 1 10-50 9z" fill="#f6cb3f"/><path d="M13 34l50-8M14 39l50-8M14.500 44l50-8M15 49l50-8M16 54l50-8M17 59l50-8M17.500 64l50-8M18 69l50-8M19 74l50-8" stroke="#cfcfcf"/><circle cx="39" cy="88" r="4"/></svg>
    <!-- Reminders -->
    <svg width="78" height="96"><path d="M15 20l42-8q3 0 4 3l7 51q0 4-3 5l-41 8q-4 0-4-3l-8-51q0-4 3-5z" fill="#fafafa"/><path d="M28 28l29-4M30 40l28-4M31 52l29-5M33 63l29-5" stroke="#c9c9c9"/><circle cx="22" cy="29" r="4" fill="#f19a37"/><circle cx="24" cy="40" r="4" fill="#4ba5ee"/><circle cx="26" cy="51" r="4" fill="#76cf50"/><circle cx="27.500" cy="63" r="4" fill="#b56edd"/></svg>
    <!-- Maps -->
    <svg width="78" height="96"><path d="M7 23l53-8 10 51-55 9z" fill="#f0f0ee"/><path d="M11 26l32-5 1 6-32 5z" fill="#7dbd58"/><path d="M48 19l10-1 2 6-11 2z" fill="#efc3d2"/><path d="M12 34l38-6 4 34-37 9z" fill="#e3d9c6"/><path d="M13 33l36-5 5 36" fill="none" stroke="#3f9de8" stroke-width="4.500"/><path d="M19 58q14-2 28 14" fill="none" stroke="#f4c643" stroke-width="5"/><path d="M20 42l15-2q1 12-6 15-9-3-9-13z" fill="#3d76c7"/><path d="M20 42l15-2v4l-15 2z" fill="#d94840"/><text x="28" y="52" font-size="8" fill="#fff" text-anchor="middle">280</text><circle cx="58" cy="58" r="16" fill="#f4f4f4"/><circle cx="58" cy="58" r="9.500" fill="none" stroke="#5b86a4" stroke-width="1.500"/><path d="M58 43l2 4h-4z" fill="#d33"/><text x="58" y="61.500" font-size="9.500" text-anchor="middle" fill="#333">3D</text></svg>
    <!-- Photos -->
    <svg width="78" height="96"><circle cx="40" cy="45" r="32" fill="#f2f2f1"/><g id="petals" opacity=".88"></g></svg>
    <!-- Messages -->
    <svg width="78" height="96"><linearGradient id="ms" x2="0" y2="1"><stop stop-color="#66b9f7"/><stop offset="1" stop-color="#2a7ef0"/></linearGradient><path d="M40 15c18 0 32 11 32 26S58 67 40 67q-4 0-8-1-4 6-13 7 4-4 4-10Q8 55 8 41c0-15 14-26 32-26z" fill="url(#ms)"/><path d="M51 42c11 0 19 7 19 15 0 5-3 9-7 12q0 3 2 6-5 0-9-3h-5c-11 0-19-7-19-15s8-15 19-15z" fill="#f2f6fb"/><g fill="#1f57a8"><circle cx="42" cy="57" r="3"/><circle cx="51.500" cy="57" r="3"/><circle cx="61" cy="57" r="3"/></g></svg>
    <!-- FaceTime -->
    <svg width="78" height="96"><linearGradient id="ft" x2="0" y2="1"><stop stop-color="#83e585"/><stop offset="1" stop-color="#46c546"/></linearGradient><rect x="7" y="17" width="59" height="51" rx="6" fill="url(#ft)"/><rect x="17" y="30" width="29" height="25" rx="4" fill="#fff"/><path d="M48 40l10-8v22l-10-8z" fill="#fff"/><circle cx="56" cy="57" r="16.500" fill="#f5f6f5"/><path d="M49 49l4-1 3 5-2 3q1 4 4 6l3-1 4 4-3 3q-6 2-11-6t-2-13z" fill="#4dbb4e"/></svg>
    <!-- Pages -->
    <svg width="78" height="96"><path d="M10 22l45-8 11 54-48 12z" fill="#fbfbfb"/><path d="M10 22l45-8 2 11-45 9z" fill="#f2952f"/><text x="15" y="30" font-size="9" fill="#fff" transform="rotate(-10 15 30)">PAGES</text><path d="M16 37l20-3 3 17-20 3z" fill="#4390e0"/><path d="M22 40q6-4 11 0 0 7-5 9-6-2-6-9z" fill="#f4941e"/><path d="M41 35l13-3M42 40l12-3M43 45l11-3M20 59l30-6M21 64l30-6M22 69l24-5" stroke="#a9a9a9" stroke-width="1.300"/><path d="M62 12q4-2 6 1L54 58l-6-2z" fill="#e8962a"/><path d="M50 50l6 2-4 16-6 11 0-14z" fill="#2e2f33"/></svg>
    <!-- Numbers -->
    <svg width="78" height="96"><path d="M9 49h61l1 26H8z" fill="#f1f1f1"/><path d="M18 45h10v24H18z" fill="#d94550"/><path d="M30 33h11v36H30z" fill="#ee9b34"/><path d="M43 15h11v54H43z" fill="#5cc257"/><path d="M56 26h11v43H56z" fill="#3f90ea"/><path d="M18 45h10v4H18zM30 33h11v4H30zM43 15h11v4H43zM56 26h11v4H56z" fill="#fff" opacity=".4"/><path d="M12 53v18" stroke="#999" stroke-width="2" stroke-dasharray="2 3"/></svg>
    <!-- Keynote -->
    <svg width="78" height="96"><path d="M39 38h3v36h-3z" fill="#c9d2da"/><ellipse cx="40" cy="73.500" rx="14" ry="4.500" fill="#c8d6e3"/><path d="M15 13h49l5 25H11z" fill="#3fa1e6"/><path d="M11 36h58v4H11z" fill="#73c1f3"/><path d="M22 17h36l1 17H21z" fill="#fff"/><circle cx="32" cy="27" r="6" fill="#49a2dd"/><path d="M32 27v-6a6 6 0 0 1 5 9z" fill="#a84fc4"/><path d="M32 27l5 4a6 6 0 0 1-9 1z" fill="#74c244"/><path d="M43 22v11" stroke="#f3b229" stroke-width="2"/><path d="M46 23h9M46 27h8M46 31h9" stroke="#bbb"/></svg>
    <!-- iTunes -->
    <svg width="78" height="96"><linearGradient id="it" x2="1" y2="1"><stop stop-color="#f94f6a"/><stop offset=".5" stop-color="#b55fe4"/><stop offset="1" stop-color="#3cb8f5"/></linearGradient><circle cx="40" cy="45" r="30.500" fill="#f5f5fa" stroke="url(#it)" stroke-width="3.500"/><path d="M32 31l23-6v30q0 5-5.500 5.500T44 56t7-6V37l-15 3v19q0 6-6 6.500T24 61t8-7z" fill="url(#it)"/></svg>
    <!-- iBooks -->
    <svg width="78" height="96"><linearGradient id="ib" x2="0" y2="1"><stop stop-color="#f7ac32"/><stop offset="1" stop-color="#dd5a1f"/></linearGradient><circle cx="40" cy="45" r="31" fill="url(#ib)" stroke="#e9e5e1" stroke-width="2.500"/><path d="M40 34q-9-8-20-2v28q11-4 20 2 9-6 20-2V32q-11-6-20 2z" fill="#f6f1ec"/><path d="M40 34v28" stroke="#d77a3b" stroke-width="1.500"/></svg>
    <!-- Remote Desktop -->
    <svg width="78" height="96"><rect x="10" y="15.500" width="60" height="59" rx="2" fill="#cf4c30"/><path d="M10 52q30-20 60-16V16H10z" fill="#e0613f"/><path d="M39 51H22V32h30v9M27 58h10l2-7" fill="none" stroke="#fff" stroke-width="2.500"/><circle cx="50" cy="53" r="11.500" fill="#cf4c30" stroke="#fff" stroke-width="2"/><path d="M45 50l4 4-4 4M55 46l-4 4 4 4" fill="none" stroke="#fff" stroke-width="2"/></svg>
    <!-- App Store -->
    <svg width="78" height="96"><linearGradient id="as" x2="0" y2="1"><stop stop-color="#4cb9f7"/><stop offset="1" stop-color="#2760e6"/></linearGradient><circle cx="40" cy="45" r="31" fill="url(#as)" stroke="#e6e8eb" stroke-width="2.500"/><path d="M18 45h44M38 25l18 36M42 25L24 60" stroke="#f4f7fb" stroke-width="4.500" stroke-linecap="round"/><circle cx="65" cy="21.500" r="14.500" fill="#e04b40"/><text x="65" y="28.500" font-size="20" text-anchor="middle" fill="#fff">7</text></svg>
    <!-- System Preferences -->
    <svg width="78" height="96"><linearGradient id="sp" x2="0" y2="1"><stop stop-color="#c9d4dc"/><stop offset="1" stop-color="#7d7f80"/></linearGradient><rect x="8" y="15" width="64" height="60" rx="3" fill="url(#sp)"/><circle cx="40" cy="45" r="27.500" fill="#2d2d2d"/><circle cx="40" cy="45" r="22.500" fill="none" stroke="#a9a9a9" stroke-width="4" stroke-dasharray="2.200 1.700"/><circle cx="40" cy="45" r="18.500" fill="none" stroke="#a5a5a5" stroke-width="5"/><path d="M40 45h18M40 45l-9-16M40 45l-9 16" stroke="#a5a5a5" stroke-width="3.500"/><circle cx="40" cy="45" r="5" fill="#8b8b8b"/></svg>
    <!-- Lens with histogram -->
    <svg width="78" height="96"><ellipse cx="34" cy="31" rx="20" ry="21" fill="#3b3636"/><path d="M14 27q7-15 22-15 12 0 17 14" stroke="#d0683f" stroke-width="2" fill="none"/><circle cx="28" cy="43" r="22" fill="#242424" stroke="#666" stroke-width="2"/><circle cx="28" cy="43" r="15" fill="#5b5d5f"/><circle cx="26" cy="40" r="9" fill="#a5a7a8" opacity=".6"/><rect x="29" y="48.500" width="45" height="30" fill="#1d1f1c" stroke="#9b9b9b"/><path d="M31 77q5-5 7-16t4-10l5 8 6-8 5 14 5-4 8 16z" fill="#a9cf3d"/><path d="M31 74q12 2 20-12t20-10" fill="none" stroke="#f2f2f2" stroke-width="2.200"/></svg>
    <!-- Screen grab camera -->
    <svg width="78" height="96"><path d="M3 24q0-7 7-7h7q3-8 8-8h16q6 0 9 9l10 2q6 1 6 7v36H8q-5 0-5-5z" fill="#484b4e"/><circle cx="10" cy="25" r="5" fill="#22262a" stroke="#888"/><circle cx="42" cy="42" r="20" fill="#2a2b2d"/><path d="M23 38q4-15 20-15" stroke="#d0683f" stroke-width="2.500" fill="none"/><circle cx="42" cy="42" r="12" fill="#77797c"/><rect x="28" y="46" width="48" height="31" fill="#3572b0" stroke="#c8cdd2" stroke-width="3"/><path d="M48 79h8l3 4H45z" fill="#a9b2bb"/></svg>
    <!-- Media tray -->
    <svg width="78" height="96"><rect x="7" y="11" width="59" height="60" rx="4" fill="#281b17" stroke="#6e5e56"/><path d="M36 12h29v38q-20-10-29-38z" fill="#5a4c46"/><path d="M68 16l6 5-17 33-7-3z" fill="#e3e3e3"/><path d="M50 50l7 4-8 9-3-1z" fill="#9da0a3"/><path d="M22 44l10-3 3 7-9 4z" fill="#6dc5d2"/><path d="M38 41h9v8h-9z" fill="#c4e8ee"/><path d="M10 54l15-1 1 5-17 1zM13 67l13-6 5 5-12 7zM38 66h11v12H38zM54 63l7-5 11 9-6 5zM57 54h14l2 6H57z" fill="#e8e6e3"/><path d="M15 76l14-7 3 4-11 7zM38 78h12v4H38z" fill="#cabd3f" opacity=".8"/></svg>
    <!-- Picture with brush -->
    <svg width="78" height="96"><path d="M13 27l49-14q4-1 5 3l5 42q0 4-4 5l-48 14q-4 1-4-3L9 32q0-4 4-5z" fill="#e4aa58"/><path d="M17 36l39-13 6 35-39 14z" fill="#fff"/><path d="M20 38l34-11 5 29-34 12z" fill="#e09a22"/><path d="M22 52l35-12 2 16-34 12z" fill="#9c5412"/><circle cx="42" cy="40" r="6" fill="#ffd65c"/><path d="M28 65l7-10-7-2 7-3 4-4 3 4 7-1-5 4 3 5-6-3-4 8z" fill="#16110c"/><path d="M67 11q5-1 5 3L57 61l-6-2z" fill="#4897e3"/><path d="M51 57l7 2-4 13-6-2z" fill="#c8c8c8"/><path d="M48 69l6 2-5 11-3 0z" fill="#7d4720"/><circle cx="39" cy="88" r="4" fill="#3a0303"/></svg>
    <div class="dock-sep"></div>
    <!-- Document -->
    <svg width="78" height="96"><path d="M30 9h20v6H30z" fill="#333"/><path d="M31 11h17v3H31z" fill="#3d9a52"/><path d="M15 13h47l3 4v61H15z" fill="#fafafa"/><path d="M16 16v60" stroke="#1a1a1a" stroke-width="3.500" stroke-dasharray="3.500 2.500"/><path d="M28 24h25M24 28h28M22 34h7M22 42h36M22 45h34M22 48h36M22 51h36M22 54h20M22 58h36M22 61h36M22 64h34M22 67h28M22 71h12" stroke="#a7a7a7"/><path d="M41 13q10 4 11 16 8 0 13 5V17l-3-4z" fill="#e4e4e4"/><path d="M41 13q10 6 9 17 8 0 15 6-8-13-24-23z" fill="#b5b5b5"/></svg>
    <!-- Trash -->
    <svg width="78" height="96"><path d="M12 17l8-2 8-4 8 3 8-4 8 5 9-1 4 5-3 13H14z" fill="#f2f2f2"/><path d="M20 22l8-8 4 8zM36 24l8-11 6 10zM52 22l6-6 3 6z" fill="#555b52"/><path d="M28 18l5 6h-6z" fill="#3b9fd3"/><path d="M11 20q28 9 54 0l-6 54q-1 4-6 4H24q-5 0-6-4z" fill="#e1e0df" opacity=".97"/><path d="M11 20q28 9 54 0" fill="none" stroke="#fff" stroke-width="2"/><path d="M20 28l5 46M56 28l-4 46" stroke="#fff" stroke-width="3" opacity=".3"/></svg>
  </div>
</footer>

<script>
(function () {
  // Photos flower: eight petals around the centre
  var cols = ['#f3a33a','#e3cf43','#9cc94f','#6fbf9a','#6da9dc','#8a7fc6','#c77fb4','#e8564b'], out = '';
  cols.forEach(function (c, i) { out += '<rect x="33" y="18" width="14" height="27" rx="7" fill="' + c + '" transform="rotate(' + i * 45 + ' 40 45)"/>'; });
  document.getElementById('petals').innerHTML = out;

  // Mountain side: snow shadows, firs and sunlit rocks
  var seed = 7;
  function rnd() { seed = (seed * 16807) % 2147483647; return seed / 2147483647; }
  function blob(x, y, w, h, fill) {
    var p = '';
    for (var k = 0; k < 7; k++) {
      var a = k / 7 * 6.283, q = .55 + rnd() * .6;
      p += (x + Math.cos(a) * w * q).toFixed(1) + ',' + (y + Math.sin(a) * h * q).toFixed(1) + ' ';
    }
    return '<polygon points="' + p + '" fill="' + fill + '"/>';
  }
  var g = '', i, x, top;
  for (i = 0; i < 150; i++) g += blob(2550 + rnd() * 330, 1700 + rnd() * 100, 3 + rnd() * 8, 2 + rnd() * 6, rnd() > .35 ? '#10141d' : '#3d4c66');
  for (i = 0; i < 26; i++) g += blob(2815 + rnd() * 65, 1700 + rnd() * 100, 14, 12, rnd() > .3 ? '#0c0d13' : '#1a2130');
  for (i = 0; i < 300; i++) {
    x = 2550 + rnd() * 215; top = 1738 + Math.max(0, x - 2556) * .22;
    g += blob(x, top + rnd() * (1806 - top), 2 + rnd() * 7, 2 + rnd() * 5, ['#b5572c','#d98a60','#6e2c16','#2a1410','#8e4020'][Math.floor(rnd() * 5)]);
  }
  document.getElementById('rocks').innerHTML = g;
})();
</script>
</body>
</html>
